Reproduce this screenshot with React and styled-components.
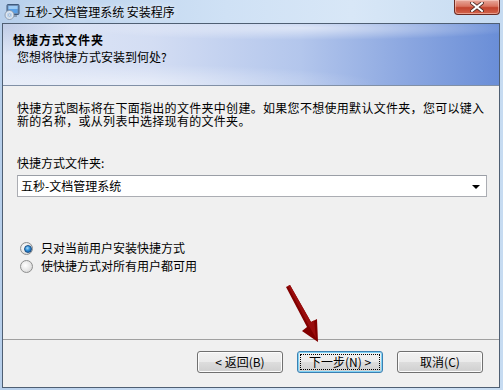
import React from "react";
import styled, { createGlobalStyle } from "styled-components";

const GlobalStyle = createGlobalStyle`
  html, body {
    margin: 0;
    padding: 0;
    background: #bcd3ee;
  }
  body {
    font-family: "Noto Sans CJK SC", "Liberation Sans", sans-serif;
    font-size: 12px;
    color: #000;
  }
`;

const App = () => {
  return (
    <>
      <GlobalStyle />
      <Window>
        <TitleBar>
          <AppIcon />
          <TitleText>五秒-文档管理系统 安装程序</TitleText>
          <CloseButton>
            <CloseMark viewBox="0 0 14 10">
              <path d="M2 1 L12 9 M12 1 L2 9" stroke="#4a2a25" strokeWidth="3.6" strokeLinecap="square" />
              <path d="M2 1 L12 9 M12 1 L2 9" stroke="#fff" strokeWidth="2" strokeLinecap="square" />
            </CloseMark>
          </CloseButton>
        </TitleBar>

        <Client>
          <Banner>
            <BannerTitle>快捷方式文件夹</BannerTitle>
            <BannerSub>您想将快捷方式安装到何处?</BannerSub>
          </Banner>

          <Body>
            <Paragraph>
              快捷方式图标将在下面指出的文件夹中创建。如果您不想使用默认文件夹，您可以键入
              <br />
              新的名称，或从列表中选择现有的文件夹。
            </Paragraph>
            <FieldLabel>快捷方式文件夹:</FieldLabel>
            <Combo>
              <ComboText>五秒-文档管理系统</ComboText>
              <ComboArrow />
            </Combo>
            <RadioGroup>
              <RadioRow>
                <Radio $checked />
                <RadioLabel>只对当前用户安装快捷方式</RadioLabel>
              </RadioRow>
              <RadioRow>
                <Radio />
                <RadioLabel>使快捷方式对所有用户都可用</RadioLabel>
              </RadioRow>
            </RadioGroup>
          </Body>

          <Footer>
            <Button>&lt; 返回(B)</Button>
            <Button $focused>下一步(N) &gt;</Button>
            <Button>取消(C)</Button>
          </Footer>
        </Client>

        {/* red annotation arrow drawn over the dialog */}
        <Arrow viewBox="0 0 44 64">
          <polygon points="6,5 10,3 31,40 37,37 38,60 22,49 27,45" fill="#820000" />
          <polygon points="8,4 10,3 31,40 34,38.5 36,56 29,44" fill="#9a0d0d" />
        </Arrow>
      </Window>
    </>
  );
};

const AppIcon = () => (
  <IconSvg viewBox="0 0 16 16">
    <rect x="3" y="0.5" width="12" height="10" rx="1" fill="#6f8db3" stroke="#3f5a7c" />
    <rect x="4.5" y="2" width="9" height="7" fill="#5aa0e6" />
    <rect x="4.5" y="2" width="9" height="3" fill="#9ccbf5" />
    <rect x="7" y="11" width="6" height="2" fill="#8a9db5" />
    <circle cx="5.5" cy="11" r="4.5" fill="#dfe6ee" stroke="#7d8ea3" strokeWidth="0.8" />
    <circle cx="5.5" cy="11" r="2.6" fill="#b9d3f0" />
    <circle cx="5.5" cy="11" r="1" fill="#ffffff" stroke="#7d8ea3" strokeWidth="0.5" />
  </IconSvg>
);

export default App;

const Window = styled.div`
  position: relative;
  width: 503px;
  height: 390px;
  display: flex;
  flex-direction: column;
  background: linear-gradient(90deg, #b7cfeb 0%, #cfe1f5 45%, #d8e7f7 70%, #c6dbf1 100%);
  overflow: hidden;
`;

const TitleBar = styled.div`
  height: 23px;
  display: flex;
  align-items: flex-start;
  padding-left: 4px;
  box-sizing: border-box;
`;

const IconSvg = styled.svg`
  width: 16px;
  height: 16px;
  margin-top: 4px;
  flex: none;
`;

const TitleText = styled.div`
  margin-left: 4px;
  margin-top: 4px;
  font-size: 12px;
  line-height: 15px;
  color: #000;
  text-shadow: 0 0 6px rgba(255, 255, 255, 0.9);
`;

const CloseButton = styled.div`
  margin-left: auto;
  margin-right: 3px;
  width: 46px;
  height: 15px;
  box-sizing: border-box;
  border: 1px solid #6b2a22;
  border-top: none;
  border-radius: 0 0 4px 4px;
  background: linear-gradient(180deg, #e7a99c 0%, #d9735f 45%, #c2432d 55%, #d2644c 100%);
  box-shadow: inset 0 0 0 1px rgba(255, 220, 210, 0.5);
  display: flex;
  justify-content: center;
  align-items: center;
`;

const CloseMark = styled.svg`
  width: 14px;
  height: 10px;
`;

const Client = styled.div`
  flex: 1;
  margin: 0 3px 2px 2px;
  border: 1px solid #4f5f73;
  background: #f0f0f0;
  display: flex;
  flex-direction: column;
`;

const Banner = styled.div`
  height: 62px;
  border-bottom: 1px solid #8190a6;
  padding: 10px 0 0 10px;
  box-sizing: border-box;
  background:
    radial-gradient(ellipse 300px 16px at 300px 4px, rgba(255, 255, 255, 0.55), rgba(255, 255, 255, 0) 75%),
    radial-gradient(ellipse 330px 26px at 130px 60px, rgba(255, 255, 255, 0.45), rgba(255, 255, 255, 0) 75%),
    radial-gradient(ellipse 90px 40px at 0px 0px, rgba(150, 170, 210, 0.45), rgba(150, 170, 210, 0) 80%),
    linear-gradient(90deg, #e1e8f6 0%, #d3ddf3 30%, #b3c6ec 60%, #8aa6e0 82%, #6a8ed7 100%);
`;

const BannerTitle = styled.div`
  font-weight: bold;
  font-size: 12px;
  line-height: 12px;
  letter-spacing: 1px;
`;

const BannerSub = styled.div`
  margin-top: 5px;
  margin-left: 4px;
  font-size: 12px;
  line-height: 12px;
`;

const Body = styled.div`
  flex: 1;
  padding: 15px 12px 0 14px;
  display: flex;
  flex-direction: column;
`;

const Paragraph = styled.div`
  font-size: 12px;
  line-height: 13px;
  white-space: nowrap;
  letter-spacing: 0.3px;
`;

const FieldLabel = styled.div`
  margin-top: 30px;
  font-size: 12px;
  line-height: 12px;
`;

const Combo = styled.div`
  margin-top: 6px;
  width: 470px;
  height: 22px;
  box-sizing: border-box;
  border: 1px solid #abadb3;
  border-top-color: #9a9ea6;
  background: #fff;
  display: flex;
  align-items: center;
  padding: 0 6px 0 3px;
`;

const ComboText = styled.div`
  flex: 1;
  font-size: 12px;
  line-height: 14px;
`;

const ComboArrow = styled.div`
  width: 0;
  height: 0;
  border-left: 4px solid transparent;
  border-right: 4px solid transparent;
  border-top: 4px solid #000;
  margin-top: 2px;
`;

const RadioGroup = styled.div`
  margin-top: 43px;
  display: flex;
  flex-direction: column;
  gap: 2px;
`;

const RadioRow = styled.div`
  height: 16px;
  display: flex;
  align-items: center;
  padding-left: 3px;
`;

const Radio = styled.span`
  position: relative;
  width: 13px;
  height: 13px;
  box-sizing: border-box;
  border-radius: 50%;
  border: 1px solid #8e8f8f;
  background: radial-gradient(circle at 40% 40%, #ffffff 0%, #e6e6e6 55%, #c9c9c9 100%);
  flex: none;

  &::after {
    content: "";
    display: ${(p) => (p.$checked ? "block" : "none")};
    position: absolute;
    left: 2.5px;
    top: 2.5px;
    width: 6px;
    height: 6px;
    border-radius: 50%;
    background: radial-gradient(circle at 40% 35%, #a9dcfb 0%, #2f8fd8 45%, #0f4c92 100%);
    border: 0.5px solid #1c4f84;
  }
`;

const RadioLabel = styled.span`
  margin-left: 8px;
  font-size: 12px;
  line-height: 14px;
`;

const Footer = styled.div`
  border-top: 1px solid #a0a0a0;
  padding: 11px 16px 14px 0;
  display: flex;
  justify-content: flex-end;
  gap: 14px;
`;

const Button = styled.div`
  position: relative;
  width: 86px;
  height: 22px;
  box-sizing: border-box;
  border: 1px solid ${(p) => (p.$focused ? "#3c7fb1" : "#707070")};
  border-radius: 3px;
  background: linear-gradient(180deg, #f2f2f2 0%, #ebebeb 48%, #dddddd 52%, #cfcfcf 100%);
  box-shadow: inset 0 0 0 1px ${(p) => (p.$focused ? "#7fd3f6" : "#fcfcfc")};
  display: flex;
  justify-content: center;
  align-items: center;
  font-size: 12px;
  line-height: 14px;

  &::after {
    content: "";
    display: ${(p) => (p.$focused ? "block" : "none")};
    position: absolute;
    inset: 2px;
    border: 1px dotted #000;
  }
`;

const Arrow = styled.svg`
  position: absolute;
  left: 280px;
  top: 282px;
  width: 44px;
  height: 64px;
`;
